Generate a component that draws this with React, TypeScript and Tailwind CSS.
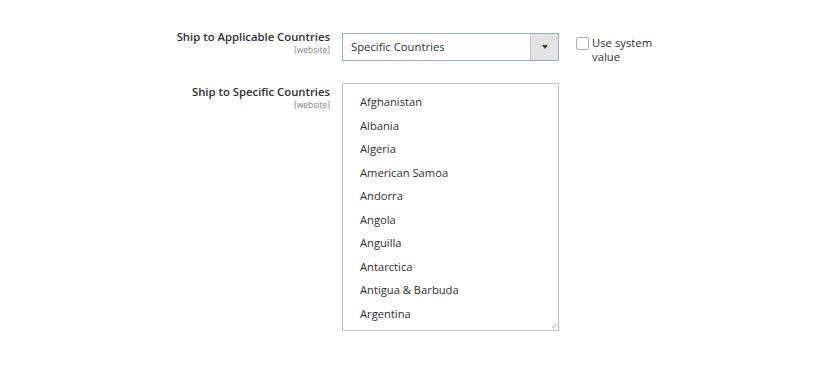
const countries = [
  "Afghanistan",
  "Albania",
  "Algeria",
  "American Samoa",
  "Andorra",
  "Angola",
  "Anguilla",
  "Antarctica",
  "Antigua & Barbuda",
  "Argentina",
];

function Label({ title }: { title: string }) {
  return (
    <div className="w-[330px] shrink-0 text-right">
      <div className="text-[11.3px] leading-[14px] font-semibold text-[#303030]">{title}</div>
      <div className="text-[8.5px] leading-[11px] text-[#808080]">[website]</div>
    </div>
  );
}

export default function App() {
  return (
    <div className="min-h-screen bg-white pt-[30px] font-['Open_Sans',sans-serif] text-[#303030]">
      {/* Ship to Applicable Countries */}
      <div className="flex h-[31px] items-start">
        <Label title="Ship to Applicable Countries" />
        <div className="ml-[12px] mt-[3px] flex h-[28px] w-[217px] border border-[#8fb0cf] bg-white">
          <div className="flex flex-1 items-center pl-[8px] text-[11.3px]">Specific Countries</div>
          <div className="flex w-[28px] items-center justify-center border-l border-[#c9c9c9] bg-[#e3e3e3]">
            <span className="h-0 w-0 border-x-[3.5px] border-t-[4px] border-x-transparent border-t-[#41362f]" />
          </div>
        </div>
        <div className="ml-[17px] mt-[6px] flex w-[90px] items-start">
          <span className="mt-[1px] h-[13px] w-[13px] shrink-0 rounded-[2px] border border-[#adadad] bg-white" />
          <span className="ml-[3px] text-[11.3px] leading-[14px] text-[#303030]">Use system value</span>
        </div>
      </div>

      {/* Ship to Specific Countries */}
      <div className="mt-[22px] flex items-start">
        <div className="pt-[2px]">
          <Label title="Ship to Specific Countries" />
        </div>
        <div className="relative ml-[12px] h-[248px] w-[217px] border border-[#c2c2c2] bg-white pt-[7px]">
          {countries.map((c) => (
            <div key={c} className="flex h-[23.5px] items-center pl-[17px] text-[11.2px] text-[#303030]">
              {c}
            </div>
          ))}
          <svg className="absolute bottom-[1px] right-[1px]" width="6" height="6" viewBox="0 0 6 6">
            <path d="M5 1 L1 5 M5 3.5 L3.5 5" stroke="#9a9a9a" strokeWidth="0.8" />
          </svg>
        </div>
      </div>
    </div>
  );
}
